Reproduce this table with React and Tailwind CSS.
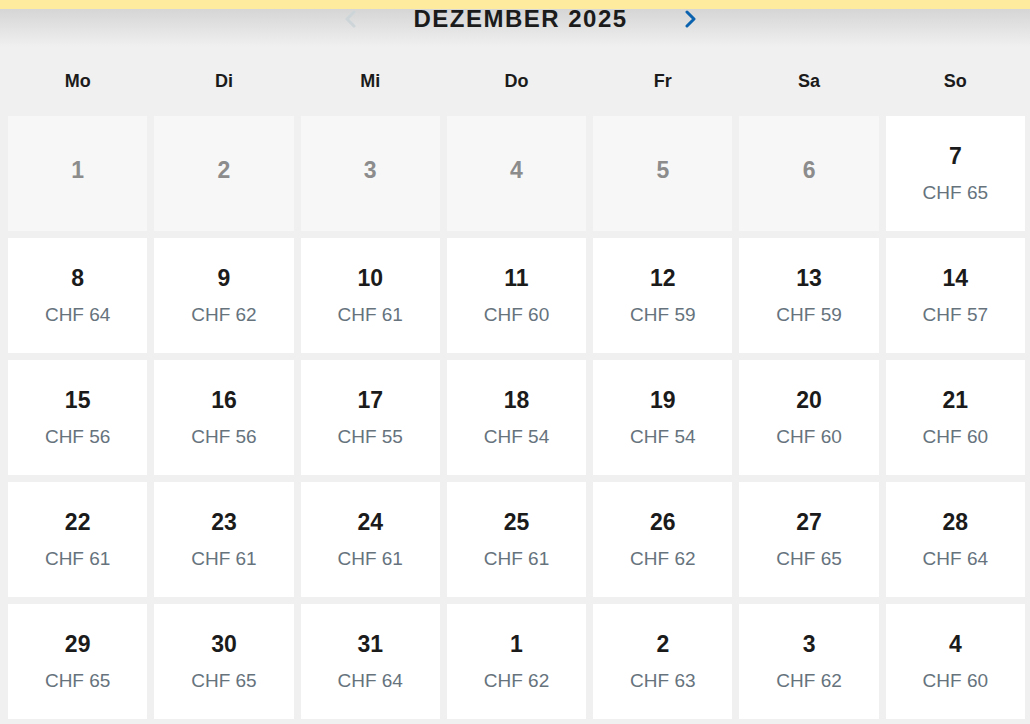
import React from "react";

const weekdays = ["Mo", "Di", "Mi", "Do", "Fr", "Sa", "So"];

// day, price (null = not bookable)
const days = [
  [1, null], [2, null], [3, null], [4, null], [5, null], [6, null], [7, 65],
  [8, 64], [9, 62], [10, 61], [11, 60], [12, 59], [13, 59], [14, 57],
  [15, 56], [16, 56], [17, 55], [18, 54], [19, 54], [20, 60], [21, 60],
  [22, 61], [23, 61], [24, 61], [25, 61], [26, 62], [27, 65], [28, 64],
  [29, 65], [30, 65], [31, 64], [1, 62], [2, 63], [3, 62], [4, 60],
];

const Chevron = ({ dir, color }) => (
  <svg width="14" height="18" viewBox="0 0 14 18" fill="none">
    <polyline
      points={dir === "left" ? "11,2 4,9 11,16" : "3,2 10,9 3,16"}
      stroke={color}
      strokeWidth="3"
      strokeLinecap="round"
      strokeLinejoin="round"
    />
  </svg>
);

const DayCell = ({ day, price }) => {
  if (price === null) {
    return (
      <div className="h-[115px] bg-[#f7f7f7] flex items-center justify-center pb-[7px]">
        <span className="text-[23px] leading-none font-bold text-[#8c8c8c]">{day}</span>
      </div>
    );
  }
  return (
    <div className="h-[115px] bg-white flex flex-col items-center justify-center">
      <span className="text-[23px] leading-none font-bold text-[#1b1b1b]">{day}</span>
      <span className="mt-[15px] text-[19px] leading-none text-[#66737d]">CHF {price}</span>
    </div>
  );
};

export default function App() {
  return (
    <div
      className="w-[1030px] h-[724px] overflow-hidden bg-[#f0f0f0]"
      style={{ fontFamily: '"Liberation Sans", Arial, sans-serif' }}
    >
      <div className="relative z-10 h-[9px] bg-[#feeb9d]" />
      <div className="bg-[linear-gradient(#d4d4d4,#f0f0f0_40px)]">
        <div className="-mt-[2px] h-[24px] flex items-center justify-center pl-[11px]">
          <button className="flex items-center justify-center">
            <Chevron dir="left" color="#cdd5d9" />
          </button>
          <h1 className="mx-[56px] text-[24px] leading-none font-bold tracking-[1.5px] text-[#1b1b1b]">
            DEZEMBER 2025
          </h1>
          <button className="flex items-center justify-center">
            <Chevron dir="right" color="#0b62ae" />
          </button>
        </div>
        <div className="mt-[31px] h-[38px] grid grid-cols-7 gap-x-[7px] pl-2 pr-[5px] items-center">
          {weekdays.map((d) => (
            <div key={d} className="text-center text-[18px] leading-none font-bold text-[#1b1b1b]">
              {d}
            </div>
          ))}
        </div>
      </div>
      <div className="mt-[16px] grid grid-cols-7 gap-[7px] pl-2 pr-[5px]">
        {days.map(([day, price], i) => (
          <DayCell key={i} day={day} price={price} />
        ))}
      </div>
    </div>
  );
}
